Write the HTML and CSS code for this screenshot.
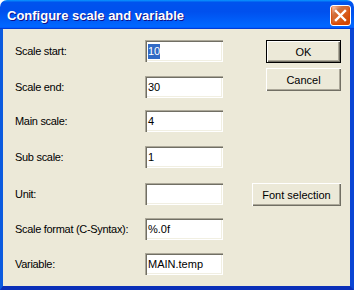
FILE: index.html
```html
<!DOCTYPE html>
<html>
<head>
<meta charset="utf-8">
<link rel="stylesheet" href="styles.css">
</head>
<body>
<div class="window">
  <div class="titlebar">
    <span class="title">Configure scale and variable</span>
    <button class="close" aria-label="Close">
      <svg width="21" height="21" viewBox="0 0 21 21"><path d="M6 6 L15 15 M15 6 L6 15" stroke="#fff" stroke-width="2.4" stroke-linecap="square" fill="none"/></svg>
    </button>
  </div>
  <div class="client">
    <div class="form">
      <div class="label">Scale start:</div><div class="edit"><span class="sel">10</span></div>
      <div class="label">Scale end:</div><div class="edit">30</div>
      <div class="label">Main scale:</div><div class="edit">4</div>
      <div class="label">Sub scale:</div><div class="edit">1</div>
      <div class="label">Unit:</div><div class="edit"></div>
      <div class="label">Scale format (C-Syntax):</div><div class="edit">%.0f</div>
      <div class="label">Variable:</div><div class="edit">MAIN.temp</div>
    </div>
    <div class="buttons">
      <div class="btn default">OK</div>
      <div class="btn cancel">Cancel</div>
      <div class="btn wide font">Font selection</div>
    </div>
  </div>
</div>
</body>
</html>
```
FILE: styles.css
```css
html, body {
  margin: 0;
  padding: 0;
  background: #ffffff;
}
.window {
  width: 354px;
  height: 290px;
  display: flex;
  flex-direction: column;
  font-family: "Liberation Sans", Arial, sans-serif;
  font-size: 11px;
  color: #000;
}
.titlebar {
  height: 29px;
  box-sizing: border-box;
  display: flex;
  align-items: center;
  padding: 2px 3px 0 7px;
  border-radius: 7px 7px 0 0;
  background: linear-gradient(180deg, #0997ff 0, #0053ee 8%, #0050ee 40%, #0066ff 88%, #0066ff 93%, #005bff 95%, #003dd7 96%, #003dd7 100%);
}
.title {
  flex: 1;
  color: #fff;
  font-weight: bold;
  font-size: 13px;
  text-shadow: 1px 1px #0f1089;
  letter-spacing: 0;
}
.close {
  width: 21px;
  height: 21px;
  padding: 0;
  margin: 0 0 1px 0;
  border: 1px solid #fff;
  border-radius: 3px;
  box-sizing: border-box;
  display: flex;
  align-items: center;
  justify-content: center;
  background: radial-gradient(circle at 90% 90%, #cc4600 0, #dc6527 55%, #cd7546 70%, #ffccb2 90%, #fff 100%);
  box-shadow: inset 0 -1px 2px 1px #da4600;
}
.close svg {
  display: block;
  margin: -1px;
}
.client {
  flex: 1;
  display: flex;
  background: #ece9d8;
  border-left: 3px solid #0b5bdf;
  border-right: 4px solid #0a45d4;
  border-bottom: 4px solid #0a2fb8;
  box-shadow: inset 0 0 0 0 transparent;
}
.form {
  display: grid;
  grid-template-columns: 130px 78px;
  grid-template-rows: 36px 34px 36px 37px 35px 35px 22px;
  align-items: start;
  padding: 11px 0 0 12px;
  letter-spacing: -0.3px;
}
.label {
  height: 22px;
  line-height: 22px;
  white-space: nowrap;
}
.edit {
  height: 22px;
  box-sizing: border-box;
  background: #fff;
  padding: 2px 3px;
  line-height: 18px;
  box-shadow: inset 1px 1px #aca899, inset 2px 2px #716f64, inset -1px -1px #fff, inset -2px -2px #f1efe2;
  letter-spacing: 0;
}
.sel {
  background: #316ac5;
  color: #fff;
  display: inline-block;
  line-height: 15px;
}
.buttons {
  margin-left: auto;
  display: flex;
  flex-direction: column;
  align-items: flex-end;
  padding: 11px 9px 0 0;
}
.btn {
  width: 75px;
  height: 23px;
  box-sizing: border-box;
  display: flex;
  align-items: center;
  justify-content: center;
  background: #ece9d8;
  box-shadow: inset 1px 1px #fff, inset -1px -1px #716f64, inset -2px -2px #aca899;
}
.btn.default {
  border: 1px solid #000;
}
.btn.cancel {
  margin-top: 5px;
}
.btn.wide {
  width: 89px;
}
.btn.font {
  margin-top: 92px;
}
```
